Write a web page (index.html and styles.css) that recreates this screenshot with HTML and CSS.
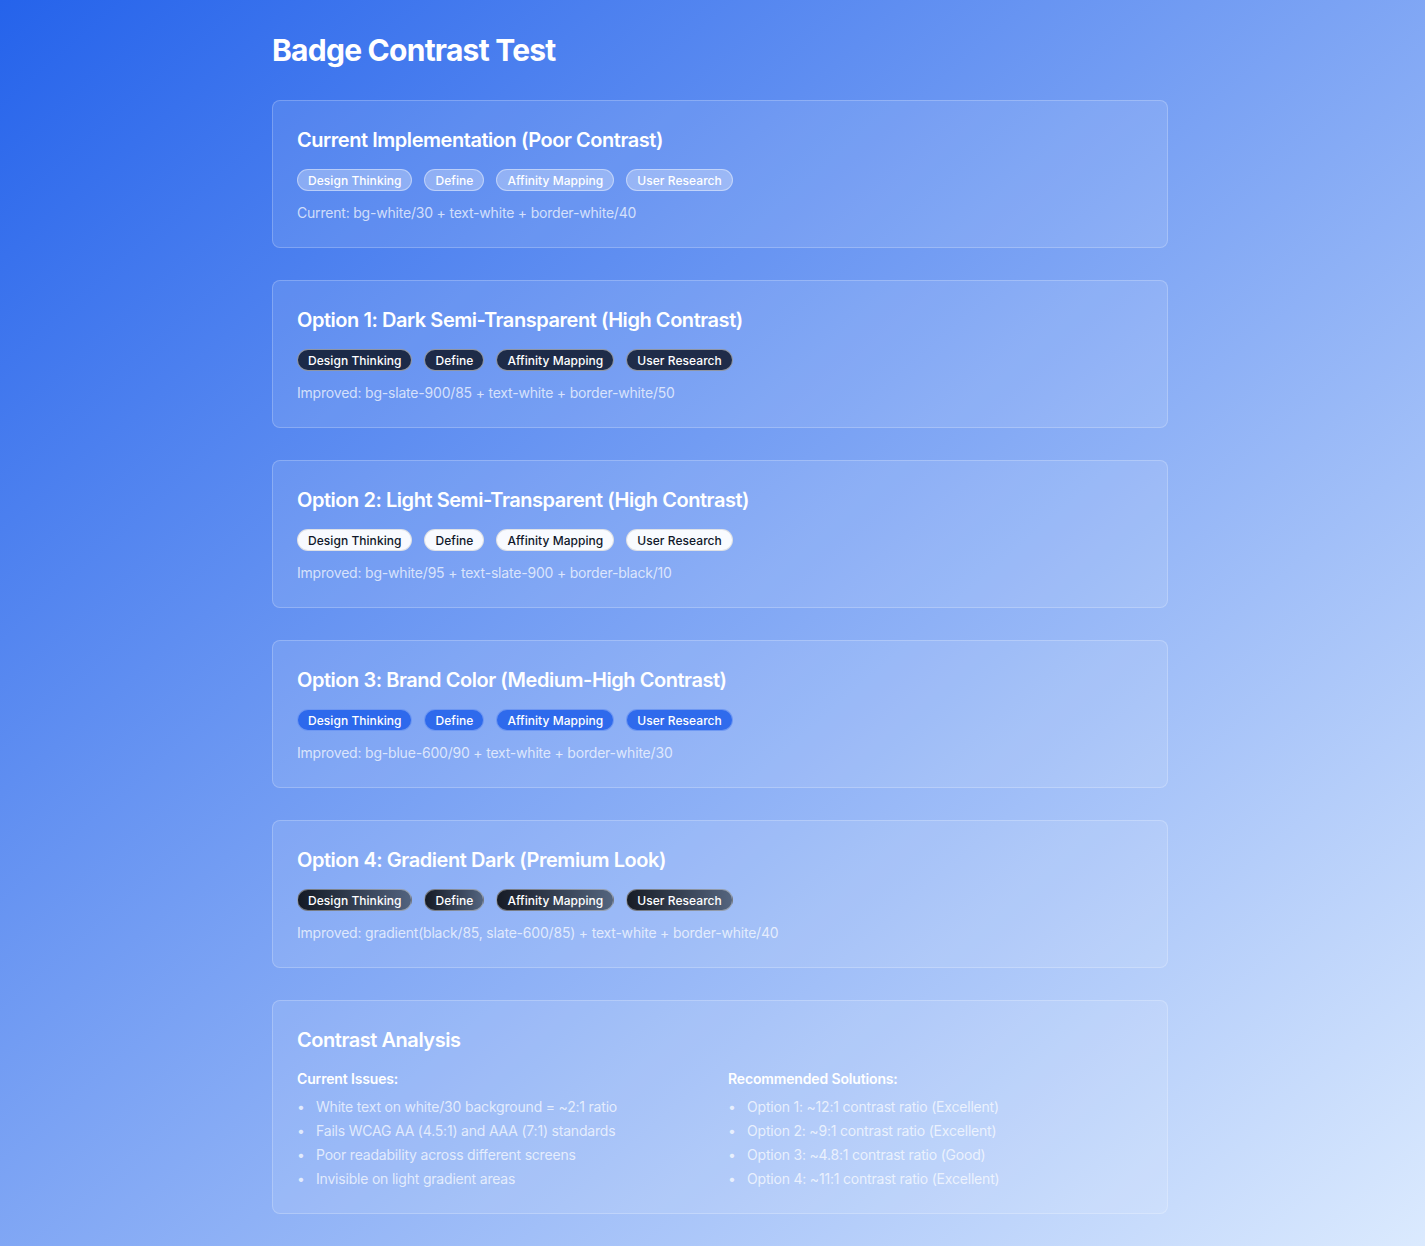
FILE: index.html
```html
<!DOCTYPE html>
<html lang="en">
<head>
<meta charset="utf-8">
<title>Badge Contrast Test</title>
<link rel="stylesheet" href="styles.css">
</head>
<body>
<div class="page">
  <main class="container">
    <h1 class="page-title">Badge Contrast Test</h1>

    <section class="card">
      <h2 class="card-title">Current Implementation (Poor Contrast)</h2>
      <div class="badges">
        <span class="badge badge-current">Design Thinking</span>
        <span class="badge badge-current">Define</span>
        <span class="badge badge-current">Affinity Mapping</span>
        <span class="badge badge-current">User Research</span>
      </div>
      <p class="desc">Current: bg-white/30 + text-white + border-white/40</p>
    </section>

    <section class="card">
      <h2 class="card-title">Option 1: Dark Semi-Transparent (High Contrast)</h2>
      <div class="badges">
        <span class="badge badge-dark">Design Thinking</span>
        <span class="badge badge-dark">Define</span>
        <span class="badge badge-dark">Affinity Mapping</span>
        <span class="badge badge-dark">User Research</span>
      </div>
      <p class="desc">Improved: bg-slate-900/85 + text-white + border-white/50</p>
    </section>

    <section class="card">
      <h2 class="card-title">Option 2: Light Semi-Transparent (High Contrast)</h2>
      <div class="badges">
        <span class="badge badge-light">Design Thinking</span>
        <span class="badge badge-light">Define</span>
        <span class="badge badge-light">Affinity Mapping</span>
        <span class="badge badge-light">User Research</span>
      </div>
      <p class="desc">Improved: bg-white/95 + text-slate-900 + border-black/10</p>
    </section>

    <section class="card">
      <h2 class="card-title">Option 3: Brand Color (Medium-High Contrast)</h2>
      <div class="badges">
        <span class="badge badge-brand">Design Thinking</span>
        <span class="badge badge-brand">Define</span>
        <span class="badge badge-brand">Affinity Mapping</span>
        <span class="badge badge-brand">User Research</span>
      </div>
      <p class="desc">Improved: bg-blue-600/90 + text-white + border-white/30</p>
    </section>

    <section class="card">
      <h2 class="card-title">Option 4: Gradient Dark (Premium Look)</h2>
      <div class="badges">
        <span class="badge badge-gradient">Design Thinking</span>
        <span class="badge badge-gradient">Define</span>
        <span class="badge badge-gradient">Affinity Mapping</span>
        <span class="badge badge-gradient">User Research</span>
      </div>
      <p class="desc">Improved: gradient(black/85, slate-600/85) + text-white + border-white/40</p>
    </section>

    <section class="card">
      <h2 class="card-title">Contrast Analysis</h2>
      <div class="analysis">
        <div class="analysis-col">
          <h3 class="col-title">Current Issues:</h3>
          <ul class="list">
            <li>White text on white/30 background = ~2:1 ratio</li>
            <li>Fails WCAG AA (4.5:1) and AAA (7:1) standards</li>
            <li>Poor readability across different screens</li>
            <li>Invisible on light gradient areas</li>
          </ul>
        </div>
        <div class="analysis-col">
          <h3 class="col-title">Recommended Solutions:</h3>
          <ul class="list">
            <li>Option 1: ~12:1 contrast ratio (Excellent)</li>
            <li>Option 2: ~9:1 contrast ratio (Excellent)</li>
            <li>Option 3: ~4.8:1 contrast ratio (Good)</li>
            <li>Option 4: ~11:1 contrast ratio (Excellent)</li>
          </ul>
        </div>
      </div>
    </section>
  </main>
</div>
</body>
</html>
```

FILE: styles.css
```css
* { box-sizing: border-box; }

html, body {
  margin: 0;
  padding: 0;
}

body {
  font-family: Inter, "Noto Sans", "Liberation Sans", sans-serif;
  color: #fff;
  background: linear-gradient(to bottom right, #2563eb 0%, #dbeafe 100%);
  min-height: 100vh;
}

.page {
  min-height: 100vh;
  padding: 32px 0 32px 15px;
  display: flex;
  justify-content: center;
}

.container {
  width: 896px;
  display: flex;
  flex-direction: column;
  gap: 32px;
}

.page-title {
  margin: 0;
  font-size: 30px;
  line-height: 36px;
  font-weight: 700;
  letter-spacing: -0.75px;
}

.card {
  background: rgba(255, 255, 255, 0.1);
  border: 1px solid rgba(255, 255, 255, 0.22);
  border-radius: 8px;
  padding: 24px;
}

.card-title {
  margin: 0 0 16px;
  padding-top: 1px;
  height: 28px;
  font-size: 20px;
  line-height: 28px;
  font-weight: 600;
  letter-spacing: -0.45px;
}

.badges {
  display: flex;
  flex-wrap: wrap;
  gap: 12px;
}

.badge {
  display: inline-block;
  font-size: 12px;
  line-height: 16px;
  font-weight: 500;
  padding: 3px 10px 1px;
  border-radius: 9999px;
  border: 1px solid transparent;
  color: #fff;
  letter-spacing: 0.05px;
}

.badge-current {
  background: rgba(255, 255, 255, 0.3);
  border-color: rgba(255, 255, 255, 0.4);
}

.badge-dark {
  background: rgba(15, 23, 42, 0.85);
  border-color: rgba(255, 255, 255, 0.5);
}

.badge-light {
  background: rgba(255, 255, 255, 0.95);
  color: #0f172a;
  border-color: rgba(0, 0, 0, 0.1);
}

.badge-brand {
  background: rgba(37, 99, 235, 0.9);
  border-color: rgba(255, 255, 255, 0.3);
}

.badge-gradient {
  background: linear-gradient(to right, rgba(0, 0, 0, 0.85), rgba(71, 85, 105, 0.85));
  border-color: rgba(255, 255, 255, 0.4);
}

.desc {
  margin: 12px 0 0;
  font-size: 14px;
  line-height: 20px;
  color: rgba(255, 255, 255, 0.72);
  letter-spacing: -0.2px;
}

.analysis {
  display: grid;
  grid-template-columns: 1fr 1fr;
  gap: 16px;
}

.col-title {
  margin: 0 0 8px;
  font-size: 14px;
  line-height: 20px;
  font-weight: 600;
  letter-spacing: -0.15px;
}

.list {
  margin: 0;
  padding: 0;
  list-style: none;
  display: flex;
  flex-direction: column;
  gap: 4px;
}

.list li {
  display: flex;
  font-size: 14px;
  line-height: 20px;
  color: rgba(255, 255, 255, 0.72);
  letter-spacing: -0.2px;
}

.list li::before {
  content: "\2022";
  flex: 0 0 19px;
  letter-spacing: 0;
}
```
